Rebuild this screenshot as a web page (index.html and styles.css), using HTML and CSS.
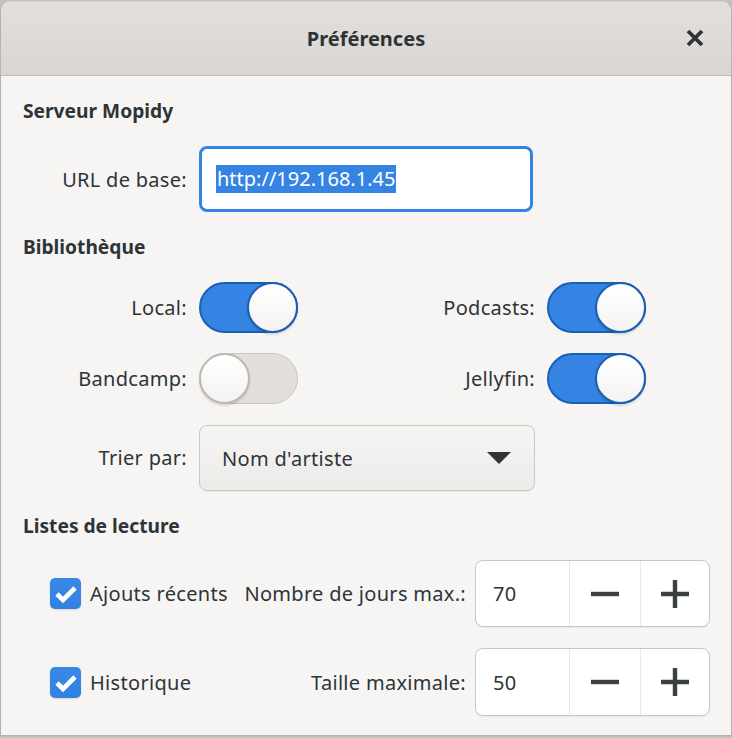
FILE: index.html
```html
<!DOCTYPE html>
<html lang="fr">
<head>
<meta charset="utf-8">
<title>Préférences</title>
<link rel="stylesheet" href="styles.css">
</head>
<body>
<div class="window">
  <header class="titlebar">
    <span class="title">Préférences</span>
    <button class="close" aria-label="Fermer">
      <svg width="18" height="18" viewBox="0 0 18 18"><path d="M2 2 L16 16 M16 2 L2 16" stroke="#2e3436" stroke-width="3.8" stroke-linecap="butt" fill="none"/></svg>
    </button>
  </header>
  <main class="content">
    <h2 class="section">Serveur Mopidy</h2>
    <div class="grid url-grid">
      <label class="label">URL de base:</label>
      <div class="entry focused"><span class="sel">http://192.168.1.45</span></div>
    </div>

    <h2 class="section">Bibliothèque</h2>
    <div class="grid lib-grid">
      <span class="label">Local:</span>
      <span class="switch on"><span class="knob"></span></span>
      <span class="label">Podcasts:</span>
      <span class="switch on"><span class="knob"></span></span>

      <span class="label">Bandcamp:</span>
      <span class="switch"><span class="knob"></span></span>
      <span class="label">Jellyfin:</span>
      <span class="switch on"><span class="knob"></span></span>

      <span class="label">Trier par:</span>
      <div class="combo">
        <span>Nom d'artiste</span>
        <svg width="24" height="12" viewBox="0 0 24 12"><path d="M0 0 H24 L12 12 Z" fill="#2e3436"/></svg>
      </div>
    </div>

    <h2 class="section">Listes de lecture</h2>
    <div class="pl-grid">
      <div class="check-item">
        <span class="checkbox"><svg width="31" height="31" viewBox="0 0 31 31"><path d="M7 16 L13 22 L25 10" stroke="#fff" stroke-width="4.6" fill="none"/></svg></span>
        <span>Ajouts récents</span>
      </div>
      <span class="label">Nombre de jours max.:</span>
      <div class="spin">
        <span class="spin-value">70</span>
        <span class="spin-btn"><svg width="28" height="28" viewBox="0 0 28 28"><path d="M0 14 H28" stroke="#3b4043" stroke-width="4.4"/></svg></span>
        <span class="spin-btn"><svg width="28" height="28" viewBox="0 0 28 28"><path d="M0 14 H28 M14 0 V28" stroke="#3b4043" stroke-width="4.4"/></svg></span>
      </div>

      <div class="check-item">
        <span class="checkbox"><svg width="31" height="31" viewBox="0 0 31 31"><path d="M7 16 L13 22 L25 10" stroke="#fff" stroke-width="4.6" fill="none"/></svg></span>
        <span>Historique</span>
      </div>
      <span class="label">Taille maximale:</span>
      <div class="spin">
        <span class="spin-value">50</span>
        <span class="spin-btn"><svg width="28" height="28" viewBox="0 0 28 28"><path d="M0 14 H28" stroke="#3b4043" stroke-width="4.4"/></svg></span>
        <span class="spin-btn"><svg width="28" height="28" viewBox="0 0 28 28"><path d="M0 14 H28 M14 0 V28" stroke="#3b4043" stroke-width="4.4"/></svg></span>
      </div>
    </div>
  </main>
</div>
</body>
</html>
```

FILE: styles.css
```css
* { box-sizing: border-box; }
html, body { margin: 0; padding: 0; }
body {
  background: #c0c0c0;
  width: 732px;
  height: 738px;
  overflow: hidden;
  font-family: "Noto Sans", "Open Sans", sans-serif;
  font-size: 20px;
  letter-spacing: 0.3px;
  color: #2e3436;
}
.window {
  margin: 1px 0 0 0;
  width: 732px;
  height: 735px;
  background: #f6f5f4;
  border: 1px solid #b4b4b4;
  border-top-color: #d4d4d4;
  border-radius: 10px 10px 0 0;
  overflow: hidden;
}
.titlebar {
  height: 74px;
  background: linear-gradient(#e2dfdc, #dad6d2);
  border-bottom: 1px solid #bfb8b1;
  display: flex;
  align-items: center;
  justify-content: center;
  position: relative;
}
.title {
  font-weight: bold;
  font-size: 20px;
  letter-spacing: 0;
  margin-top: 0;
}
.close {
  position: absolute;
  right: 26px;
  top: 26px;
  width: 20px;
  height: 20px;
  padding: 0;
  border: 0;
  background: transparent;
  display: flex;
  align-items: center;
  justify-content: center;
}
.content {
  padding: 23px 21px 0 21px;
}
.section {
  margin: 0;
  font-size: 19.2px;
  letter-spacing: 0;
  font-weight: bold;
  line-height: 24px;
  height: 24px;
  padding-left: 1px;
}
.grid {
  display: grid;
  grid-template-columns: 165px 99px 225px 98px;
  column-gap: 12px;
  align-items: center;
}
.label {
  text-align: right;
  white-space: nowrap;
}
.url-grid {
  margin: 23px 0 23px 0;
}
.entry {
  grid-column: 2 / 4;
  width: 334px;
  height: 66px;
  background: #fff;
  border-radius: 8px;
  display: flex;
  align-items: center;
  padding-left: 14px;
}
.entry.focused {
  border: 3px solid #3584e4;
}
.sel {
  background: #3584e4;
  color: #fff;
  line-height: 28px;
  padding: 0 1px;
  letter-spacing: 0;
}
.lib-grid {
  margin: 23px 0 24px 0;
  grid-template-rows: 51px 51px 66px;
  row-gap: 20px;
}
.switch {
  display: block;
  width: 99px;
  height: 51px;
  border-radius: 26px;
  background: #e1dedb;
  border: 1px solid #cdc7c2;
  position: relative;
}
.switch.on {
  background: #3584e4;
  border: 2px solid #1b5fb3;
}
.knob {
  position: absolute;
  top: -1px;
  left: -1px;
  width: 51px;
  height: 51px;
  border-radius: 50%;
  background: linear-gradient(#ffffff, #f4f3f2);
  border: 2px solid #bfb8b1;
  box-shadow: 0 2px 2px rgba(0,0,0,0.12);
}
.switch.on .knob {
  top: -2px;
  left: auto;
  right: -2px;
  border-color: #1b5fb3;
}
.combo {
  grid-column: 2 / 4;
  height: 66px;
  margin-top: 2px;
  background: linear-gradient(#f6f5f4, #edebe9);
  border: 1px solid #cdc7c2;
  border-radius: 8px;
  box-shadow: 0 1px 1px rgba(0,0,0,0.06);
  display: flex;
  align-items: center;
  justify-content: space-between;
  padding: 0 23px 0 22px;
}
.pl-grid {
  display: grid;
  grid-template-columns: auto 1fr 235px;
  grid-template-rows: 67px 68px;
  column-gap: 9px;
  row-gap: 21px;
  align-items: center;
  margin-top: 22px;
}
.check-item {
  display: flex;
  align-items: center;
  gap: 9px;
  margin-left: 28px;
  white-space: nowrap;
}
.checkbox {
  width: 31px;
  height: 31px;
  border-radius: 5px;
  background: linear-gradient(#3b88e6, #3181e2);
  box-shadow: 0 1px 2px rgba(0,0,0,0.12);
  display: block;
}
.checkbox svg { display: block; }
.spin {
  display: flex;
  height: 100%;
  background: #fff;
  border: 1px solid #cdc7c2;
  border-radius: 8px;
  box-shadow: 0 1px 1px rgba(0,0,0,0.06);
}
.spin-value {
  width: 95px;
  display: flex;
  align-items: center;
  padding-left: 17px;
  border-right: 1px solid #ebe9e7;
}
.spin-btn {
  width: 70px;
  display: flex;
  align-items: center;
  justify-content: center;
}
.spin-btn + .spin-btn {
  border-left: 1px solid #ebe9e7;
}
.spin-btn svg { display: block; }
```
